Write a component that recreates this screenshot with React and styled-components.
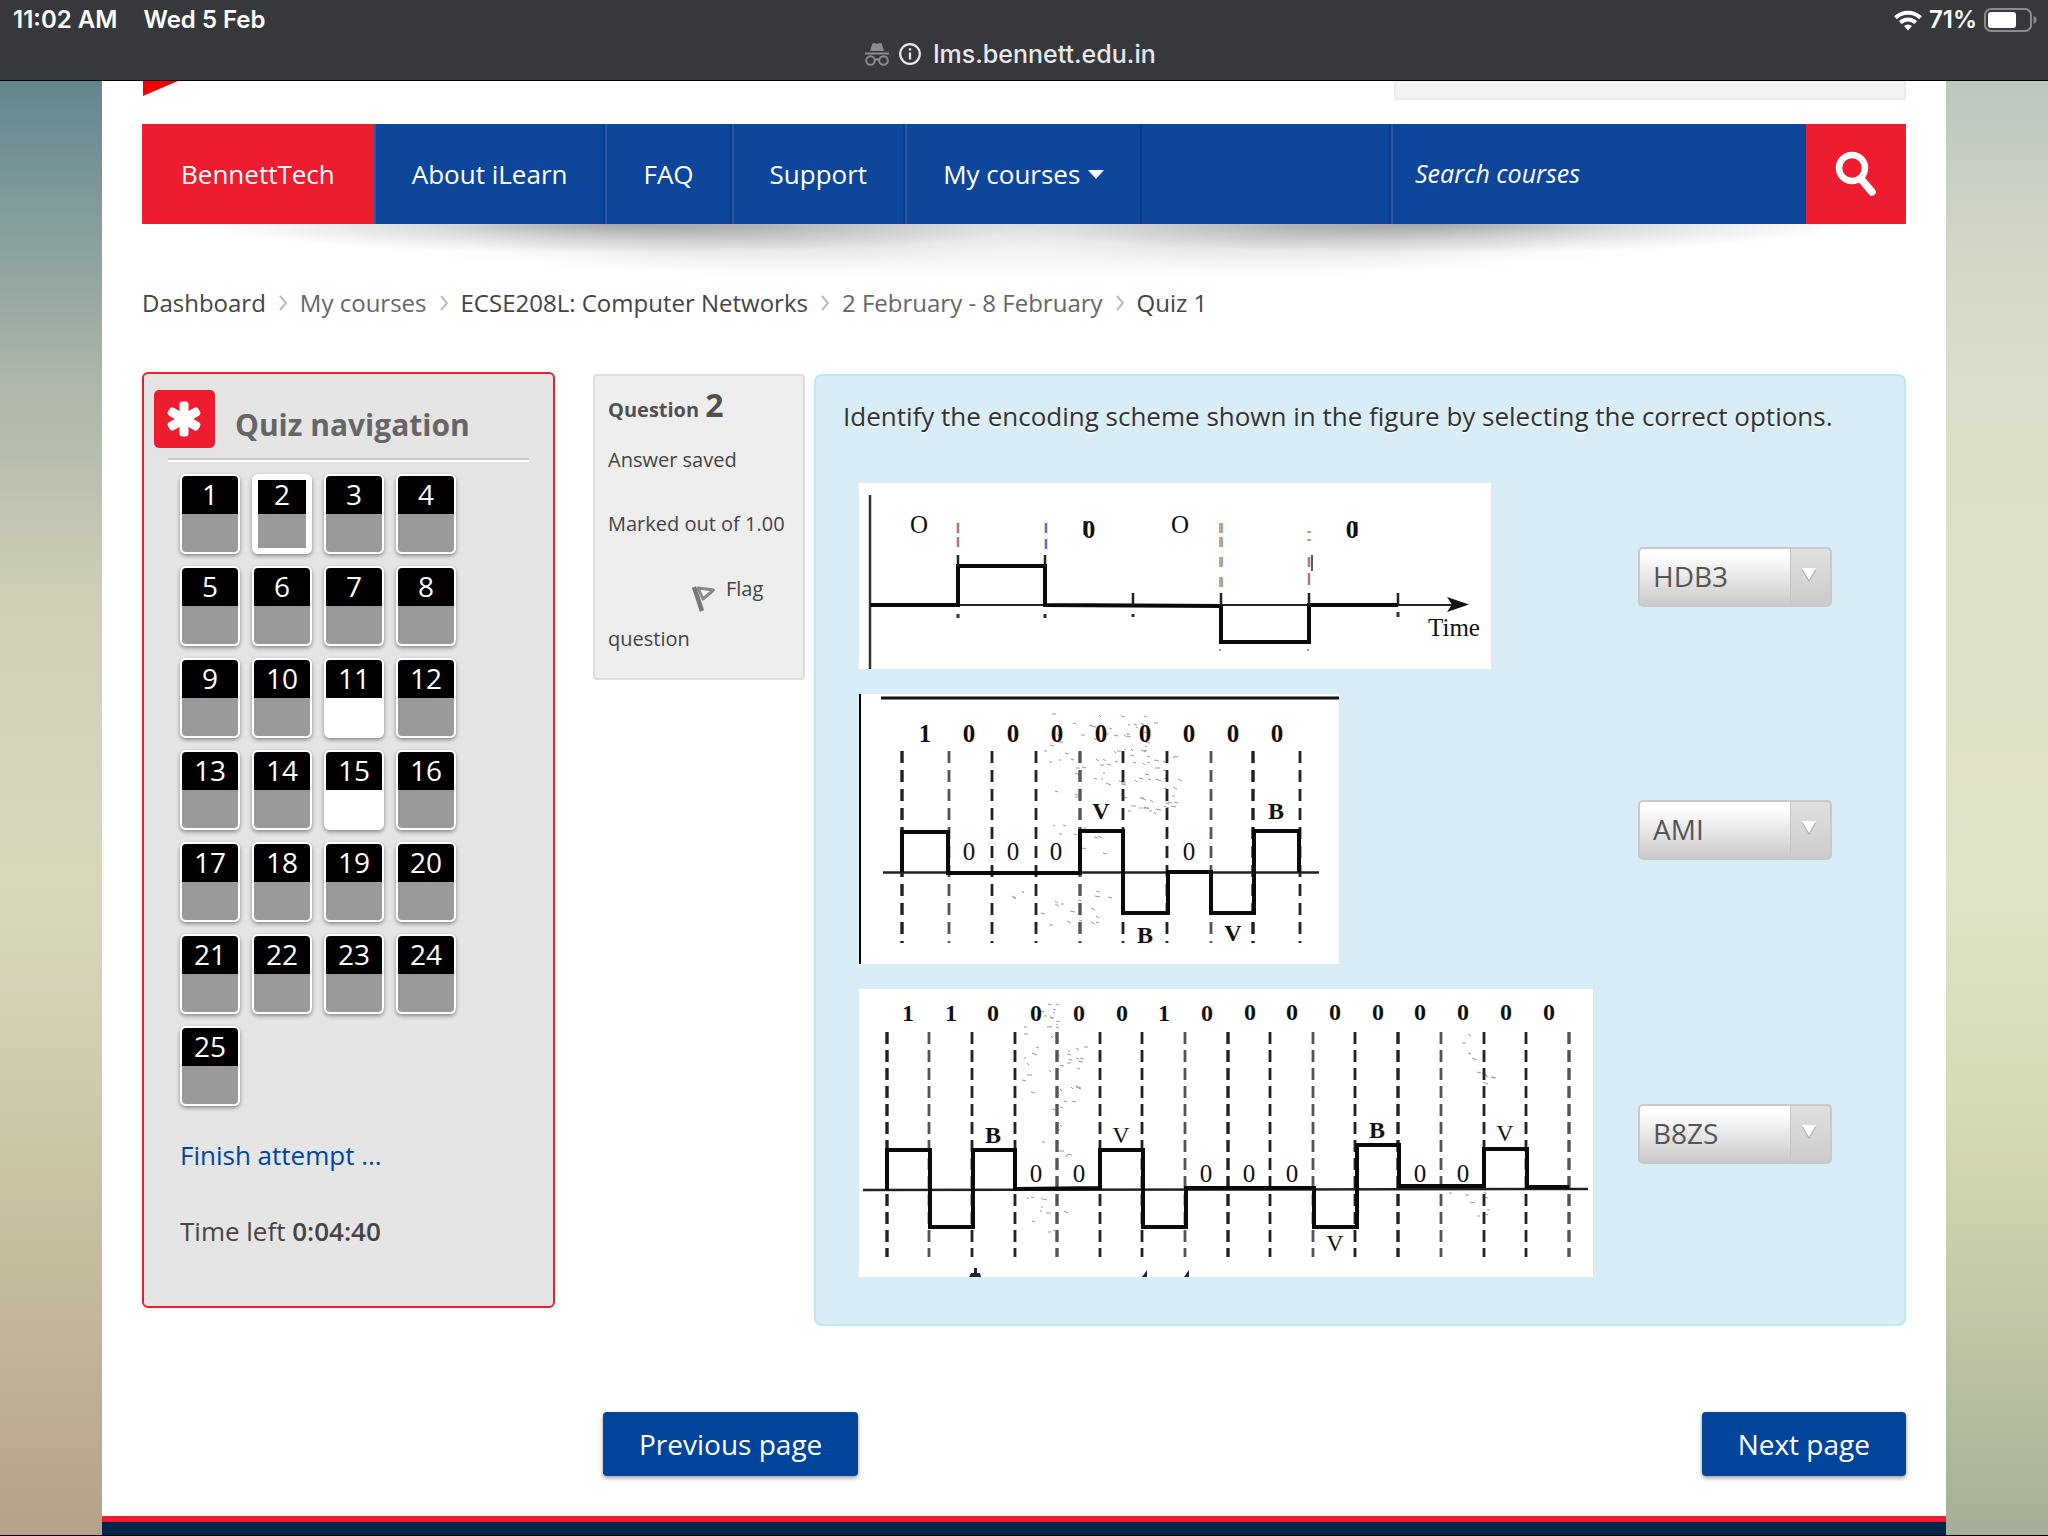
import React from "react";
import styled, { createGlobalStyle, css } from "styled-components";

const RED = "#ee1c2f";
const BLUE = "#0d469b";

const GlobalStyle = createGlobalStyle`
  *, *::before, *::after { box-sizing: border-box; }
  body {
    margin: 0;
    background: #d5d6bf;
    color: #444;
    font-family: "Open Sans", "Noto Sans", sans-serif;
    font-size: 26px;
    line-height: 40px;
  }
  a { color: inherit; text-decoration: none; }
  h1, h2, h3, p, ol, ul { margin: 0; padding: 0; }
  ol, ul { list-style: none; }
`;

/* ---------- device and browser bar ---------- */

const DeviceBar = styled.header`
  background: #37383c;
  border-bottom: 1px solid #000;
  height: 81px;
  padding: 6px 10px 0 13px;
  font-family: Inter, "Liberation Sans", sans-serif;
  color: #fff;
`;

const StatusRow = styled.div`
  display: flex;
  align-items: center;
  justify-content: space-between;
  height: 28px;
  font-size: 24px;
  font-weight: 600;
  line-height: 28px;
`;

const StatusGroup = styled.div`
  display: flex;
  align-items: center;
  gap: ${(p) => p.$gap}px;
`;

const AddressRow = styled.div`
  display: flex;
  align-items: center;
  justify-content: center;
  gap: 10px;
  height: 40px;
  padding-right: 30px;
  font-size: 25px;
  font-weight: 500;
  color: #e6e8eb;
`;

const Address = styled.span`
  margin-left: 2px;
`;

/* ---------- page frame ---------- */

const Backdrop = styled.div`
  border-bottom: 1px solid #000;
  padding: 0 102px;
  background:
    linear-gradient(to bottom, #64868f 0, #8fa3a0 180px, #adb6a9 300px, #cfcfb8 520px, #d9d8bd 800px, #cbc5a8 1080px, #b4a28a 1455px) left / 102px 100% no-repeat,
    linear-gradient(to bottom, #bcc7bf 0, #d3d6c6 170px, #dcdecb 300px, #e0e4c9 800px, #d6dab8 1020px, #c2c8a8 1230px, #a4ae98 1455px) right / 102px 100% no-repeat;
`;

const Sheet = styled.div`
  background: #fff;
`;

const Inner = styled.div`
  padding: 0 40px;
`;

const Masthead = styled.div`
  display: flex;
  justify-content: space-between;
  align-items: flex-start;
  height: 43px;
`;

const UserBox = styled.div`
  width: 29%;
  height: 19px;
  background: #f3f3f3;
  border: 2px solid #ececec;
  border-top: 0;
`;

/* ---------- main menu ---------- */

const MenuBar = styled.nav`
  display: flex;
  height: 100px;
  background: ${BLUE};
  color: #fff;
`;

const MenuLink = styled.a`
  display: flex;
  align-items: center;
  gap: 8px;
  padding: 0 36px;
  border-left: 2px solid #2759a8;
  border-right: 2px solid #0b3b86;
  ${(p) =>
    p.$active &&
    css`
      padding: 0 37px;
      border-color: ${RED};
      background: ${RED};
    `}
`;

const SearchForm = styled.form`
  display: flex;
  margin-left: auto;
  border-left: 2px solid #0b3b86;
`;

const SearchInput = styled.input`
  width: 415px;
  padding: 0 22px 3px;
  border: 0;
  border-left: 2px solid #2759a8;
  border-radius: 0;
  background: transparent;
  color: #fff;
  font: italic 25px "Open Sans", "Noto Sans", sans-serif;
  &::placeholder { color: #fff; opacity: 1; }
`;

const SearchButton = styled.button`
  display: flex;
  align-items: center;
  justify-content: center;
  width: 100px;
  border: 0;
  background: ${RED};
`;

const MenuShadow = styled.div`
  height: 59px;
  background:
    radial-gradient(ellipse 24% 50% at 27% 0, rgba(0, 0, 0, 0.28), rgba(0, 0, 0, 0.11) 50%, transparent),
    radial-gradient(ellipse 24% 50% at 73% 0, rgba(0, 0, 0, 0.28), rgba(0, 0, 0, 0.11) 50%, transparent),
    radial-gradient(ellipse 18% 85% at 35% 0, rgba(0, 0, 0, 0.12), transparent),
    radial-gradient(ellipse 18% 85% at 65% 0, rgba(0, 0, 0, 0.12), transparent),
    radial-gradient(ellipse 42% 100% at 50% 0, rgba(0, 0, 0, 0.08), transparent);
`;

const Breadcrumb = styled.nav`
  ol {
    display: flex;
    align-items: center;
    gap: 13px;
    font-size: 24px;
    line-height: 40px;
  }
  li {
    display: flex;
    align-items: center;
    gap: 13px;
  }
`;

const Crumb = styled.a`
  color: ${(p) => (p.$muted ? "#666" : "#444")};
`;

/* ---------- content ---------- */

const Content = styled.div`
  display: grid;
  grid-template-columns: 413px minmax(0, 1fr);
  column-gap: 38px;
  align-items: start;
  padding-top: 49px;
`;

const Block = styled.aside`
  border: 2px solid ${RED};
  border-radius: 6px;
  background: #e5e5e5;
  padding-bottom: 55px;
`;

const BlockHead = styled.div`
  display: flex;
  align-items: flex-start;
  gap: 20px;
  height: 84px;
  padding: 16px 10px 0;
`;

const BlockIcon = styled.span`
  display: flex;
  align-items: center;
  justify-content: center;
  width: 61px;
  height: 58px;
  padding-right: 2px;
  border-radius: 5px;
  background: ${RED};
`;

const BlockTitle = styled.h2`
  padding-top: 15px;
  font-size: 30px;
  line-height: 40px;
  font-weight: 700;
  color: #666;
`;

const BlockRule = styled.hr`
  margin: 0 24px;
  height: 4px;
  border: 0;
  border-top: 2px solid #ccc;
  border-bottom: 2px solid #fff;
`;

const BlockBody = styled.div`
  padding: 12px 36px 0;
`;

const QuestionGrid = styled.ol`
  display: grid;
  grid-template-columns: repeat(4, 60px);
  gap: 12px;
`;

const QuestionTile = styled.a`
  display: block;
  height: 80px;
  border: ${(p) => (p.$current ? 6 : 2)}px solid #fff;
  border-radius: 6px;
  background: linear-gradient(#000 40px, ${(p) => (p.$saved ? "#999" : "#fff")} 40px) border-box;
  box-shadow: 0 2px 4px rgba(0, 0, 0, 0.4);
  color: #fff;
  font-size: 28px;
  line-height: ${(p) => (p.$current ? 28 : 36)}px;
  text-align: center;
`;

const FinishLink = styled.a`
  display: block;
  margin-top: 29px;
  color: #00459b;
`;

const Timer = styled.p`
  margin-top: 36px;
  strong { font-weight: 600; }
`;

const Question = styled.section`
  display: flex;
  align-items: flex-start;
  gap: 9px;
  padding-top: 2px;
`;

const Info = styled.div`
  flex: none;
  width: 212px;
  padding: 9px 13px 14px;
  border: 2px solid #ddd;
  border-radius: 4px;
  background: #eee;
  font-size: 20px;
  line-height: 50px;
`;

const InfoTitle = styled.h3`
  display: flex;
  align-items: baseline;
  gap: 6px;
  height: 40px;
  font-size: 20px;
  line-height: 40px;
  font-weight: 700;
  color: #505050;
  span { font-size: 32px; }
`;

const InfoLine = styled.p`
  margin-top: ${(p) => (p.$first ? 10 : 14)}px;
`;

const FlagButton = styled.button`
  display: block;
  width: 100%;
  margin-top: 15px;
  padding: 0;
  border: 0;
  background: none;
  color: inherit;
  font: inherit;
  text-align: left;
  svg {
    margin: 0 10px 0 84px;
    vertical-align: -16px;
  }
`;

const Formulation = styled.div`
  flex: 1;
  min-width: 0;
  padding: 20px 27px 34px;
  border: 2px solid #bce8f1;
  border-radius: 8px;
  background: #d9edf6;
  color: #333;
  text-shadow: 0 2px 0 rgba(255, 255, 255, 0.6);
`;

const Matches = styled.table`
  width: 100%;
  margin-top: 35px;
  border-collapse: collapse;
`;

const FigureCell = styled.td`
  width: 795px;
  padding: 12px 16px 13px;
`;

const AnswerCell = styled.td`
  padding: 0;
  vertical-align: middle;
`;

const Figure = styled.svg`
  display: block;
  background: #fff;
  text-shadow: none;
  font-family: "Liberation Serif", serif;
`;

const SelectWrap = styled.span`
  position: relative;
  display: block;
  width: 194px;
  svg {
    position: absolute;
    right: 15px;
    top: 20px;
    pointer-events: none;
  }
`;

const Select = styled.select`
  appearance: none;
  display: block;
  width: 100%;
  height: 60px;
  padding: 0 44px 2px 13px;
  border: 2px solid #c9c9c9;
  border-radius: 5px;
  background:
    linear-gradient(#e0e0e0, #cbcbcb) right / 39px 100% no-repeat,
    linear-gradient(#c6c6c6, #c6c6c6) right 39px top / 1px 100% no-repeat,
    linear-gradient(#fff 10%, #e2e2e2 60%, #cacaca);
  color: #555;
  font: 28px "Open Sans", "Noto Sans", sans-serif;
`;

const Pager = styled.div`
  display: flex;
  justify-content: space-between;
  margin: 86px 0 40px;
  padding-left: 461px;
`;

const PageButton = styled.button`
  height: 64px;
  padding: 0 36px;
  border: 0;
  border-radius: 4px;
  background: #00459b;
  box-shadow: 0 2px 4px rgba(0, 0, 0, 0.4);
  color: #fff;
  font: 28px "Open Sans", "Noto Sans", sans-serif;
`;

const Footer = styled.footer`
  height: 19px;
  border-top: 6px solid ${RED};
  background: #00264c;
`;

/* ---------- icons ---------- */

const WifiIcon = () => (
  <svg width="28" height="21" viewBox="0 0 28 21" aria-hidden="true">
    <g fill="none" stroke="#fff" strokeWidth="4">
      <path d="M1.5 7.8a18 18 0 0 1 25 0" />
      <path d="M6.3 12.6a11 11 0 0 1 15.4 0" />
    </g>
    <path d="M14 20.5l-4-4.4a6 6 0 0 1 8 0z" fill="#fff" />
  </svg>
);

const BatteryIcon = () => (
  <svg width="54" height="24" viewBox="0 0 54 24" aria-hidden="true">
    <rect x="1" y="1" width="46" height="22" rx="6" fill="none" stroke="#8b8c8f" strokeWidth="2" />
    <rect x="4" y="4" width="28" height="16" rx="3" fill="#fff" />
    <path d="M49.5 8c2 .8 3.2 2.200 3.200 4s-1.200 3.200-3.200 4z" fill="#8b8c8f" />
  </svg>
);

const IncognitoIcon = () => (
  <svg width="24" height="24" viewBox="0 0 24 24" aria-hidden="true">
    <path d="M5 9L7.300 1.800Q7.800.6 9 1l3 .8 3-.8q1.200-.4 1.700.8L19 9z" fill="#8b8c90" />
    <path d="M0 11.500h24" stroke="#8b8c90" strokeWidth="2" />
    <g fill="none" stroke="#8b8c90" strokeWidth="2">
      <circle cx="5.500" cy="18.500" r="4.300" />
      <circle cx="18.500" cy="18.500" r="4.300" />
      <path d="M9.800 18q2.200-1.400 4.400 0" />
    </g>
  </svg>
);

const InfoIcon = () => (
  <svg width="22" height="22" viewBox="0 0 22 22" aria-hidden="true">
    <circle cx="11" cy="11" r="9.800" fill="none" stroke="#e6e8eb" strokeWidth="2.200" />
    <path d="M11 9.500v7M11 5.200v2.400" stroke="#e6e8eb" strokeWidth="2.200" />
  </svg>
);

const SearchIcon = () => (
  <svg width="42" height="46" viewBox="0 0 42 46" aria-hidden="true">
    <circle cx="17" cy="17" r="13" fill="none" stroke="#fff" strokeWidth="6.500" />
    <path d="M26 28L37 41" stroke="#fff" strokeWidth="7.500" strokeLinecap="round" />
  </svg>
);

const AsteriskIcon = () => (
  <svg width="36" height="36" viewBox="-18 -18 36 36" aria-hidden="true">
    {[0, 60, 120].map((angle) => (
      <rect key={angle} x="-4.500" y="-17.500" width="9" height="35" rx="3" fill="#fff" transform={`rotate(${angle})`} />
    ))}
  </svg>
);

const FlagIcon = () => (
  <svg width="24" height="26" viewBox="0 0 24 26" aria-hidden="true">
    <path d="M2 1L10 25" stroke="#777" strokeWidth="4.500" />
    <path d="M6 2l15.500 2L11 13z" fill="#f4f4f4" stroke="#888" strokeWidth="3" strokeLinejoin="round" />
  </svg>
);

const CrumbArrow = () => (
  <svg width="8" height="16" viewBox="0 0 8 16" aria-hidden="true">
    <path d="M1 1l6 7-6 7" fill="none" stroke="#bbb" strokeWidth="2" />
  </svg>
);

/* ---------- line code figures ---------- */

const Glyph = ({ x, y, size = 25, bold, children }) => (
  <text x={x} y={y} fontSize={size} fontWeight={bold ? 700 : 400} textAnchor="middle" dominantBaseline="central" fill="#111">
    {children}
  </text>
);

const DashedLines = ({ xs, top, bottom, dash }) =>
  xs.map((x, i) => (
    <path
      key={x}
      d={`M${x} ${top}V${bottom}`}
      stroke={i % 3 === 1 ? "#555" : "#222"}
      strokeWidth={i % 4 === 0 ? 3.4 : 2.8}
      strokeDasharray={dash}
    />
  ));

/* Scanner dust: the same scatter on every render. */
const Specks = ({ areas }) => {
  let seed = 7;
  const next = () => {
    seed = (seed * 16807) % 2147483647;
    return seed / 2147483647;
  };
  return areas.flatMap(([x, y, w, h, count]) =>
    Array.from({ length: count }, (_, i) => {
      const px = Math.round(x + next() * w);
      const py = Math.round(y + next() * h);
      return <path key={`${x}-${y}-${i}`} d={`M${px} ${py}l${2 + Math.round(next() * 3)} ${Math.round(next() * 2)}`} stroke="#999" strokeWidth="1" />;
    })
  );
};

const AmiFigure = () => (
  <Figure width="632" height="186" viewBox="0 0 632 186" role="img" aria-label="Line code waveform over time">
    <path d="M11 12V186" stroke="#333" strokeWidth="2.500" />
    <path d="M11 122H600" stroke="#222" strokeWidth="2" />
    <path d="M11 122H99V83H186V122L362 123V159H450V122H539" fill="none" stroke="#0a0a0a" strokeWidth="4" />
    <path d="M99 72V84M186 72V84M274 110V122M362 110V124M450 110V124M539 110V122" stroke="#222" strokeWidth="2.500" />
    <path d="M453 72V88" stroke="#222" strokeWidth="1.500" />
    <path d="M588 114L610 121.500L588 129L593 121.500z" fill="#111" />
    <path d="M99 131v4M186 131v4M274 131v3M539 129v5" stroke="#333" strokeWidth="3" />
    <path d="M361 166v2M449 166v2" stroke="#999" strokeWidth="2" />
    <path d="M99 40v10M99 54v10M450 74v10M450 90v12" stroke="#b0747c" strokeWidth="2.500" />
    <path d="M187 40v10M187 56v10" stroke="#6a6ab4" strokeWidth="2.500" />
    <path d="M361 40v10M361 54v10M361 74v10M361 94v10M449 48v2M449 56v2" stroke="#dba35e" strokeWidth="2" />
    <path d="M363 40v10M363 54v10M363 74v10M363 94v10M451 48v2M451 56v2" stroke="#6cb4e0" strokeWidth="2" />
    <path d="M226 38v14M497 39v14" stroke="#222" strokeWidth="3" />
    <Glyph x={60} y={41} size={25}>O</Glyph>
    <Glyph x={321} y={41} size={25}>O</Glyph>
    <Glyph x={230} y={46} bold>0</Glyph>
    <Glyph x={493} y={46} bold>0</Glyph>
    <Glyph x={595} y={144}>Time</Glyph>
  </Figure>
);

const B8zsFigure = () => (
  <Figure width="480" height="270" viewBox="0 0 480 270" role="img" aria-label="Line code waveform for 1 0 0 0 0 0 0 0 0">
    <path d="M1 0V270" stroke="#000" strokeWidth="2" />
    <path d="M22 4H480" stroke="#111" strokeWidth="3" />
    <Specks areas={[[185, 20, 110, 40, 36], [190, 60, 130, 60, 60], [190, 130, 70, 30, 10], [150, 195, 100, 40, 20]]} />
    <DashedLines xs={[43, 90, 133, 177, 221, 264, 308, 352, 394, 441]} top={57} bottom={249} dash="12 7" />
    <path d="M24 178.500H460" stroke="#222" strokeWidth="2.500" />
    <path
      d="M43 178V138H89V179H221V137H264V219H309V178H352V219H395V137H440V178"
      fill="none"
      stroke="#0a0a0a"
      strokeWidth="4"
    />
    {["1", "0", "0", "0", "0", "0", "0", "0", "0"].map((bit, i) => (
      <Glyph key={i} x={66 + i * 44} y={39} bold>{bit}</Glyph>
    ))}
    {[110, 154, 197, 330].map((x) => (
      <Glyph key={x} x={x} y={157}>0</Glyph>
    ))}
    <Glyph x={242} y={117} size={24} bold>V</Glyph>
    <Glyph x={417} y={117} size={24} bold>B</Glyph>
    <Glyph x={286} y={241} size={24} bold>B</Glyph>
    <Glyph x={374} y={239} size={24} bold>V</Glyph>
  </Figure>
);

const Hdb3Figure = () => (
  <Figure width="734" height="288" viewBox="0 0 734 288" role="img" aria-label="Line code waveform for 1 1 0 0 0 0 1 0 0 0 0 0 0 0 0 0">
    <Specks areas={[[165, 14, 35, 26, 16], [160, 45, 65, 60, 26], [175, 110, 40, 60, 10], [165, 205, 40, 40, 12], [595, 40, 40, 60, 10], [590, 200, 40, 30, 8]]} />
    <DashedLines
      xs={[28, 70, 113, 156, 198, 241, 283, 326, 369, 411, 454, 496, 539, 582, 625, 667, 710]}
      top={43}
      bottom={268}
      dash="12 6"
    />
    <path d="M4 201L729 200" stroke="#222" strokeWidth="2.500" />
    <path
      d="M28 201V161H71V238H114V161H156V200L241 199V161H284V238H327V199H455V238H498V156H540V197H625V160H668V198H710"
      fill="none"
      stroke="#0a0a0a"
      strokeWidth="4"
    />
    {"1100001000000000".split("").map((bit, i) => (
      <Glyph key={i} x={49 + Math.round(i * 42.700)} y={i < 8 ? 24 : 23} size={24} bold>{bit}</Glyph>
    ))}
    {[177, 220, 347, 390, 433, 561, 604].map((x) => (
      <Glyph key={x} x={x} y={184}>0</Glyph>
    ))}
    <Glyph x={134} y={146} size={24} bold>B</Glyph>
    <Glyph x={262} y={146} size={24}>V</Glyph>
    <Glyph x={518} y={141} size={24} bold>B</Glyph>
    <Glyph x={646} y={144} size={24}>V</Glyph>
    <Glyph x={476} y={254} size={24}>V</Glyph>
    <path d="M110 288l2-4h3v-5h3v5h3l1 4zM283 288l5-7v7zM325 288l5-7v7z" fill="#223" />
  </Figure>
);

const MATCHES = [
  { id: "scheme-1", answer: "HDB3", Drawing: AmiFigure },
  { id: "scheme-2", answer: "AMI", Drawing: B8zsFigure },
  { id: "scheme-3", answer: "B8ZS", Drawing: Hdb3Figure },
];

const CRUMBS = [
  { text: "Dashboard" },
  { text: "My courses", muted: true },
  { text: "ECSE208L: Computer Networks" },
  { text: "2 February - 8 February", muted: true },
  { text: "Quiz 1" },
];

const UNANSWERED = [11, 15];
const CURRENT = 2;

const AnswerSelect = ({ id, value }) => (
  <SelectWrap>
    <Select id={id} defaultValue={value} aria-label="Answer">
      {["AMI", "B8ZS", "HDB3"].map((name) => (
        <option key={name}>{name}</option>
      ))}
    </Select>
    <svg width="16" height="15" viewBox="0 0 16 15" aria-hidden="true">
      <path d="M1 3h14L8 15z" fill="#aaa" />
      <path d="M1 1h14L8 13z" fill="#fff" />
    </svg>
  </SelectWrap>
);

export default function App() {
  return (
    <>
      <GlobalStyle />
      <DeviceBar>
        <StatusRow>
          <StatusGroup $gap={26}>
            <span>11:02 AM</span>
            <span>Wed 5 Feb</span>
          </StatusGroup>
          <StatusGroup $gap={7}>
            <WifiIcon />
            <span>71%</span>
            <BatteryIcon />
          </StatusGroup>
        </StatusRow>
        <AddressRow>
          <IncognitoIcon />
          <InfoIcon />
          <Address>lms.bennett.edu.in</Address>
        </AddressRow>
      </DeviceBar>

      <Backdrop>
        <Sheet>
          <Inner>
            <Masthead>
              <svg width="36" height="15" viewBox="0 0 36 15" aria-hidden="true">
                <path d="M1 0H36L1 15z" fill="#f60000" />
              </svg>
              <UserBox />
            </Masthead>

            <MenuBar aria-label="Main menu">
              <MenuLink href="#home" $active>BennettTech</MenuLink>
              <MenuLink href="#about">About iLearn</MenuLink>
              <MenuLink href="#faq">FAQ</MenuLink>
              <MenuLink href="#support">Support</MenuLink>
              <MenuLink href="#courses">
                My courses
                <svg width="16" height="9" viewBox="0 0 16 9" aria-hidden="true">
                  <path d="M0 0h16L8 9z" fill="#fff" />
                </svg>
              </MenuLink>
              <SearchForm role="search" onSubmit={(e) => e.preventDefault()}>
                <SearchInput type="text" placeholder="Search courses" aria-label="Search courses" />
                <SearchButton type="submit" aria-label="Search">
                  <SearchIcon />
                </SearchButton>
              </SearchForm>
            </MenuBar>
            <MenuShadow />

            <Breadcrumb aria-label="Breadcrumb">
              <ol>
                {CRUMBS.map(({ text, muted }, i) => (
                  <li key={text}>
                    {i > 0 && <CrumbArrow />}
                    <Crumb href="#" $muted={muted}>{text}</Crumb>
                  </li>
                ))}
              </ol>
            </Breadcrumb>

            <Content>
              <Block>
                <BlockHead>
                  <BlockIcon>
                    <AsteriskIcon />
                  </BlockIcon>
                  <BlockTitle>Quiz navigation</BlockTitle>
                </BlockHead>
                <BlockRule />
                <BlockBody>
                  <QuestionGrid>
                    {Array.from({ length: 25 }, (_, i) => i + 1).map((n) => (
                      <li key={n}>
                        <QuestionTile href={`#q${n}`} $current={n === CURRENT} $saved={!UNANSWERED.includes(n)}>
                          {n}
                        </QuestionTile>
                      </li>
                    ))}
                  </QuestionGrid>
                  <FinishLink href="#finish">Finish attempt ...</FinishLink>
                  <Timer>
                    Time left <strong>0:04:40</strong>
                  </Timer>
                </BlockBody>
              </Block>

              <Question>
                <Info>
                  <InfoTitle>
                    Question <span>2</span>
                  </InfoTitle>
                  <InfoLine $first>Answer saved</InfoLine>
                  <InfoLine>Marked out of 1.00</InfoLine>
                  <FlagButton type="button">
                    <FlagIcon />
                    Flag question
                  </FlagButton>
                </Info>
                <Formulation>
                  <p>Identify the encoding scheme shown in the figure by selecting the correct options.</p>
                  <Matches>
                    <tbody>
                      {MATCHES.map(({ id, answer, Drawing }) => (
                        <tr key={id}>
                          <FigureCell>
                            <Drawing />
                          </FigureCell>
                          <AnswerCell>
                            <AnswerSelect id={id} value={answer} />
                          </AnswerCell>
                        </tr>
                      ))}
                    </tbody>
                  </Matches>
                </Formulation>
              </Question>
            </Content>

            <Pager>
              <PageButton type="button">Previous page</PageButton>
              <PageButton type="button">Next page</PageButton>
            </Pager>
          </Inner>
          <Footer />
        </Sheet>
      </Backdrop>
    </>
  );
}
